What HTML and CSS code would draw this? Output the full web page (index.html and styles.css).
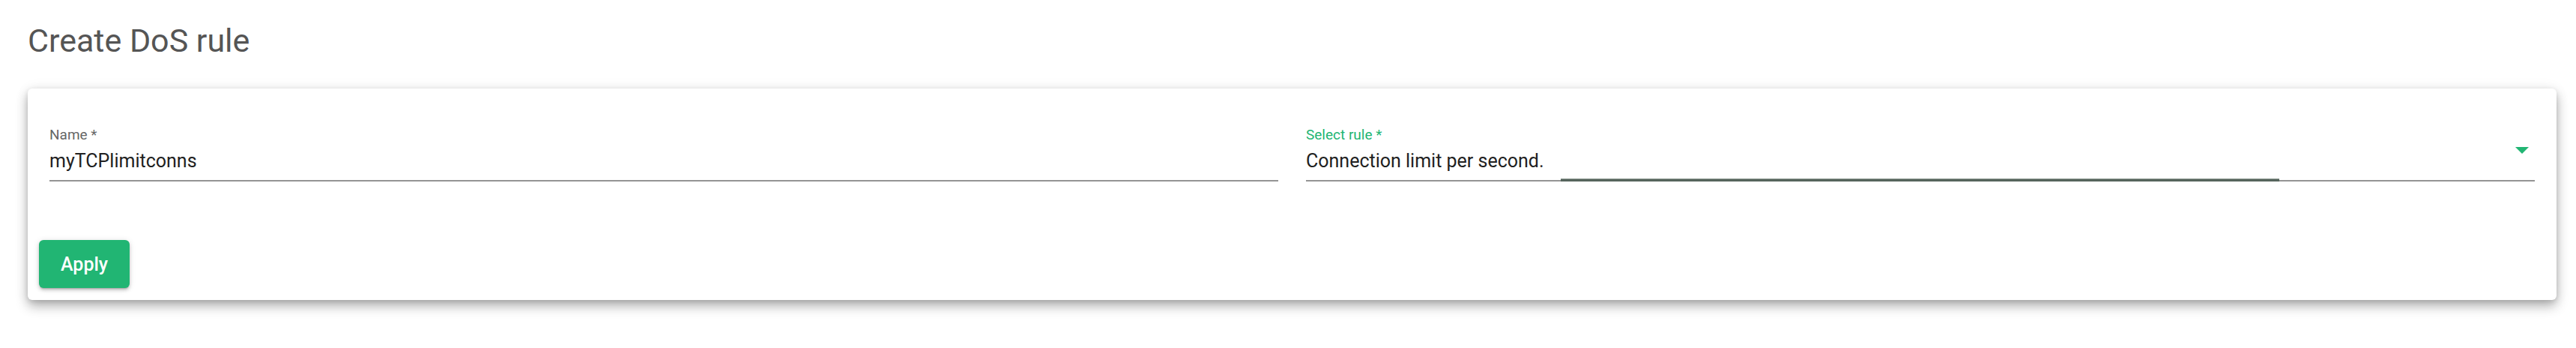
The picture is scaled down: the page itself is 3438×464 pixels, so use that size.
FILE: index.html
```html
<!DOCTYPE html>
<html lang="en">
<head>
    <meta charset="UTF-8">
    <meta name="viewport" content="width=device-width, initial-scale=1.0">
    <title>Create DoS rule</title>
    <link rel="stylesheet" href="styles.css">
</head>
<body>
    <div class="page">
        <h1 class="page-title">Create DoS rule</h1>

        <form class="card" id="dosForm">
            <div class="fields">
                <div class="field">
                    <label class="field-label" for="name">Name *</label>
                    <div class="field-input">
                        <span class="field-value" id="name">myTCPlimitconns</span>
                    </div>
                </div>

                <div class="field field-select">
                    <label class="field-label label-focused" for="rule">Select rule *</label>
                    <div class="field-input">
                        <span class="field-value" id="rule">Connection limit per second.</span>
                    </div>
                    <svg class="select-arrow" width="18" height="9" viewBox="0 0 18 9">
                        <polygon points="0,0 18,0 9,9" fill="#21b573"/>
                    </svg>
                    <div class="focus-bar"></div>
                </div>
            </div>

            <div class="actions">
                <button type="button" class="btn-apply">Apply</button>
            </div>
        </form>
    </div>
</body>
</html>
```

FILE: styles.css
```css
body {
    margin: 0;
    padding: 0;
    background-color: #fff;
    font-family: Roboto, 'Liberation Sans', sans-serif;
}

.page {
    min-height: 100vh;
    box-sizing: border-box;
    padding: 29px 26px 40px 37px;
}

.page-title {
    margin: 0 0 39px;
    font-size: 43px;
    line-height: 50px;
    font-weight: 400;
    color: #555;
}

.card {
    display: flex;
    flex-direction: column;
    margin: 0;
    background-color: #fff;
    border-radius: 6px;
    box-shadow: 0 8px 16px rgba(0, 0, 0, 0.3), 0 2px 6px rgba(0, 0, 0, 0.1), 0 0 20px rgba(0, 0, 0, 0.05);
}

.fields {
    display: grid;
    grid-template-columns: 1fr 1fr;
    column-gap: 37px;
    padding: 50px 29px 0;
}

.field {
    position: relative;
    display: flex;
    flex-direction: column;
}

.field-label {
    display: block;
    font-size: 19px;
    line-height: 23px;
    color: #666;
    margin-bottom: 9px;
}

.label-focused {
    color: #21b573;
}

.field-input {
    padding-bottom: 10px;
    border-bottom: 2px solid #949494;
}

.field-value {
    display: block;
    font-size: 25px;
    line-height: 30px;
    color: #212121;
}

.select-arrow {
    position: absolute;
    right: 8px;
    top: 28px;
}

.focus-bar {
    position: absolute;
    left: 340px;
    bottom: 0;
    width: 959px;
    height: 4px;
    background: linear-gradient(#8c9891 0 1px, #56655d 1px);
}

.actions {
    display: flex;
    padding: 78px 15px 16px;
}

.btn-apply {
    height: 64px;
    padding: 0 29px;
    border: none;
    border-radius: 6px;
    background-color: #21b573;
    color: #fff;
    font-family: Roboto, 'Liberation Sans', sans-serif;
    font-size: 25px;
    font-weight: 500;
    cursor: pointer;
    box-shadow: 0 3px 2px -2px rgba(0, 0, 0, 0.2), 0 3px 4px rgba(0, 0, 0, 0.16), 0 1px 8px rgba(0, 0, 0, 0.12);
}

.btn-apply:hover {
    background-color: #1ea468;
}
```
